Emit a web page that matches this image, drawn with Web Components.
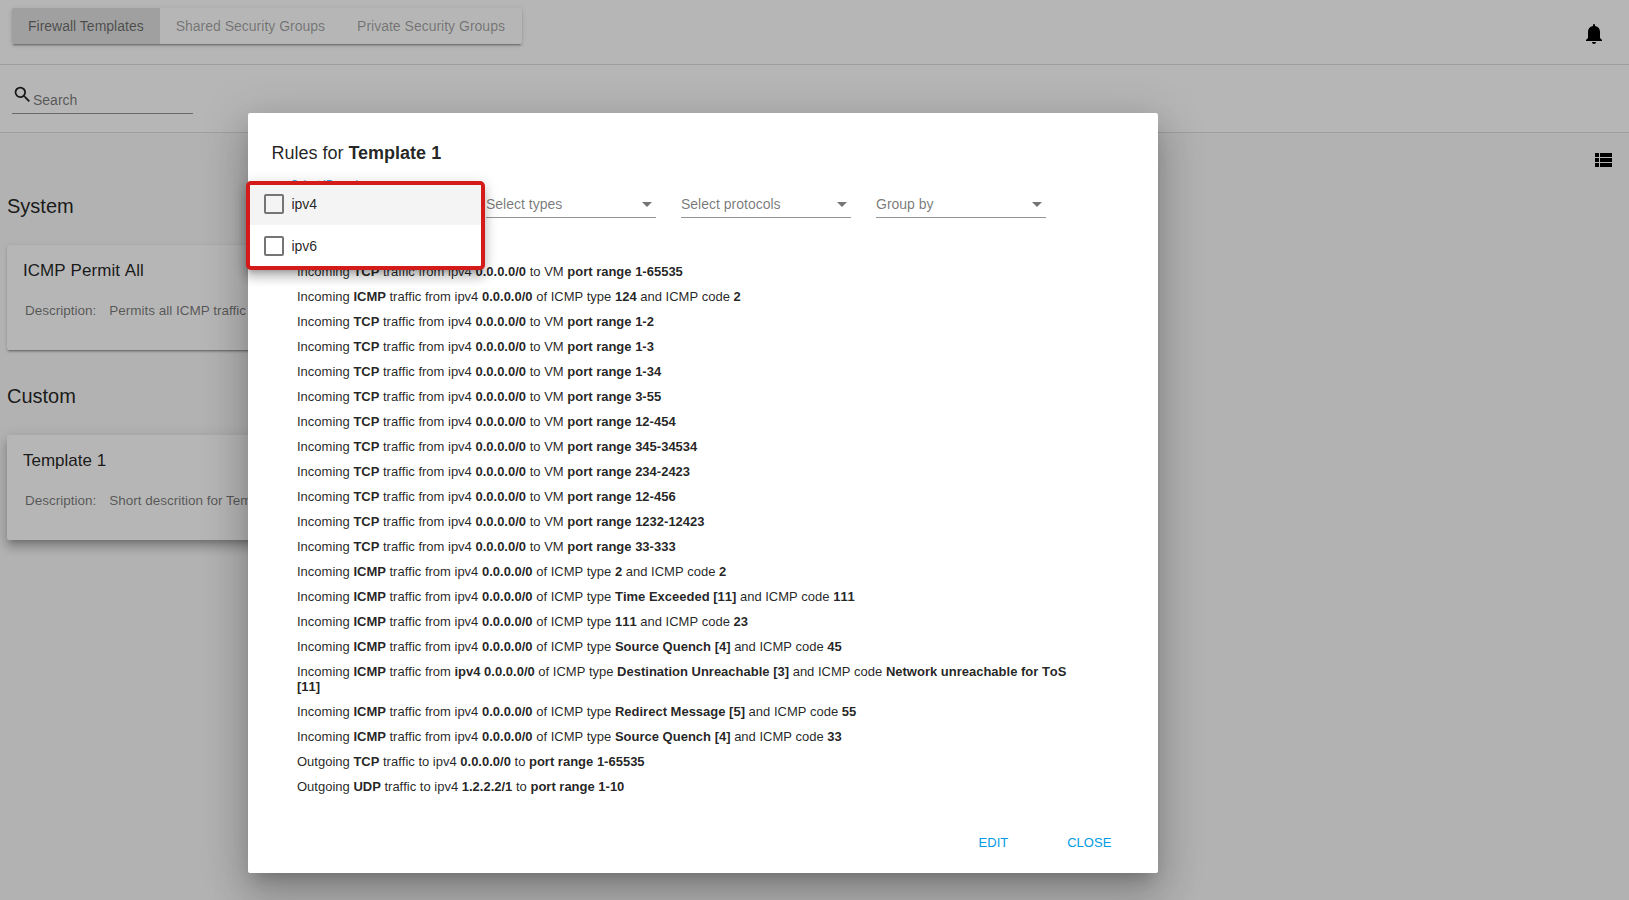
<!DOCTYPE html>
<html lang="en"><head><meta charset="utf-8"><title>Firewall</title>
<style>
html,body{margin:0;height:100%;overflow:hidden}
body{font-family:"Liberation Sans",Arial,sans-serif;background:#fafafa;color:rgba(0,0,0,.87)}
</style></head><body>
<fw-page></fw-page>
<script>
const def=(name,html,init)=>customElements.define(name,class extends HTMLElement{
  constructor(){super();const t=document.createElement('template');t.innerHTML=html;
    this.attachShadow({mode:'open'}).append(t.content.cloneNode(true));}
  connectedCallback(){if(init)init(this,this.shadowRoot);}
});

def('fw-tabs',`<style>:host{display:flex;width:509.5px;height:36px;border-radius:2px;overflow:hidden;font-size:14px;line-height:36px;color:rgba(0,0,0,.38)}
:host{box-shadow:0 3px 1px -2px rgba(0,0,0,.2),0 2px 2px 0 rgba(0,0,0,.14),0 1px 5px 0 rgba(0,0,0,.12)}
span{padding:0 16px;white-space:nowrap}span.on{background:#e0e0e0;color:rgba(0,0,0,.54)}</style>
<span class="on">Firewall Templates</span><span>Shared Security Groups</span><span>Private Security Groups</span>`);

def('fw-search',`<style>:host{display:flex;box-sizing:border-box;width:181px;height:30px;border-bottom:1px solid rgba(0,0,0,.42);font-size:14px;color:rgba(0,0,0,.54)}
svg{width:21px;height:21px;flex:none;fill:rgba(0,0,0,.87)}span{line-height:16px;padding-top:8px}</style>
<svg viewBox="0 0 24 24"><path d="M9.5 3A6.5 6.5 0 0 1 16 9.5c0 1.61-.59 3.09-1.56 4.23l.27.27h.79l5 5-1.5 1.5-5-5v-.79l-.27-.27A6.516 6.516 0 0 1 9.5 16 6.5 6.5 0 0 1 9.5 3m0 2C7 5 5 7 5 9.5S7 14 9.5 14 14 12 14 9.5 12 5 9.5 5z"/></svg><span>Search</span>`);

def('fw-card',`<style>:host{display:block;box-sizing:border-box;width:380px;height:105px;padding:16px 16px 0;border-radius:2px;background:#fff;
box-shadow:0 3px 1px -2px rgba(0,0,0,.2),0 2px 2px 0 rgba(0,0,0,.14),0 1px 5px 0 rgba(0,0,0,.12)}
:host([raised]){box-shadow:0 5px 5px -3px rgba(0,0,0,.2),0 8px 10px 1px rgba(0,0,0,.14),0 3px 14px 2px rgba(0,0,0,.12)}
h3{margin:0;font:17px/20px "Liberation Sans",sans-serif}
:host(:not([raised])) h3{font-kerning:none;letter-spacing:.06px}
p{display:flex;gap:13px;margin:22px 0 0 2px;font-size:13.5px;line-height:16px;color:rgba(0,0,0,.54);white-space:nowrap}</style>
<h3><slot name="name"></slot></h3><p><span>Description:</span><slot></slot></p>`);

def('fw-select',`<style>:host{display:flex;box-sizing:border-box;width:170px;height:25px;border-bottom:1px solid rgba(0,0,0,.42);font-size:14px;line-height:23px;color:rgba(0,0,0,.54);justify-content:space-between;position:relative}
i{border:5px solid transparent;border-top-color:rgba(0,0,0,.54);border-bottom:0;height:0;margin:9px 4px 0 0}
:host([open]) span{position:absolute;left:0;top:-15px;font-size:10.5px;line-height:12px;color:#039be5;white-space:nowrap}</style><span><slot></slot></span><i></i>`);

def('fw-option',`<style>:host{display:flex;align-items:center;height:42px;padding-left:14px;gap:7.4px;font-size:14px}
:host([active]){background:#f4f4f4}i{box-sizing:border-box;width:20px;height:20px;border:2px solid #757575;border-radius:2px}</style><i></i><slot></slot>`);

def('fw-menu',`<style>:host{display:block;box-sizing:border-box;position:absolute;left:-2px;top:68px;width:239px;height:89px;border:4px solid #d51a1a;border-radius:5px;background:#fff;overflow:hidden;
box-shadow:0 5px 5px -3px rgba(0,0,0,.2),0 8px 10px 1px rgba(0,0,0,.14),0 3px 14px 2px rgba(0,0,0,.12)}div{margin-top:-2px}</style><div><slot></slot></div>`);

const a='0.0.0.0/0';
const tcp=r=>`Incoming *TCP* traffic from ipv4 *${a}* to VM *port range ${r}*`;
const icmp=(t,c)=>`Incoming *ICMP* traffic from ipv4 *${a}* of ICMP type *${t}* and ICMP code *${c}*`;
const rules=[tcp('1-65535'),icmp('124','2'),...['1-2','1-3','1-34','3-55','12-454','345-34534','234-2423','12-456','1232-12423','33-333'].map(tcp),
icmp('2','2'),icmp('Time Exceeded [11]','111'),icmp('111','23'),icmp('Source Quench [4]','45'),
`Incoming *ICMP* traffic from *ipv4 ${a}* of ICMP type *Destination Unreachable [3]* and ICMP code *Network unreachable for ToS* *[11]*`,
icmp('Redirect Message [5]','55'),icmp('Source Quench [4]','33'),
`Outgoing *TCP* traffic to ipv4 *${a}* to *port range 1-65535*`,'Outgoing *UDP* traffic to ipv4 *1.2.2.2/1* to *port range 1-10*'];

def('fw-rules',`<style>:host{display:flex;flex-direction:column;gap:10px;width:780px;font-size:13px;line-height:15px;font-kerning:none}</style>`,
(h,s)=>rules.forEach(r=>{const d=document.createElement('div');d.innerHTML=r.replace(/\*(.+?)\*/g,'<b>$1</b>');s.append(d);}));

def('fw-dialog',`<style>:host{display:flex;flex-direction:column;box-sizing:border-box;position:relative;width:910px;height:760px;padding:24px;border-radius:2px;background:#fff;
box-shadow:0 11px 15px -7px rgba(0,0,0,.2),0 24px 38px 3px rgba(0,0,0,.14),0 9px 46px 8px rgba(0,0,0,.12)}
h2{margin:5px 0 0 -.6px;font-size:18px;line-height:22px;font-weight:400}
nav{display:flex;gap:25px;margin:29px 0 0 19px}
fw-rules{margin:46px 0 0 25px}
footer{display:flex;justify-content:flex-end;gap:59px;margin:auto 0 -1px;padding-right:22.7px;font-size:13px;line-height:15px;color:#039be5}</style>
<h2>Rules for <b>Template 1</b></h2>
<nav><fw-select open>Select IP versions</fw-select><fw-select>Select types</fw-select><fw-select>Select protocols</fw-select><fw-select>Group by</fw-select></nav>
<fw-rules></fw-rules><footer><span>EDIT</span><span>CLOSE</span></footer>
<fw-menu><fw-option active>ipv4</fw-option><fw-option>ipv6</fw-option></fw-menu>`);

def('fw-page',`<style>:host{display:block;height:900px;position:relative}
header{display:flex;box-sizing:border-box;height:65px;background:#fff;border-bottom:1px solid #dedede;padding:8px 23px 0 12px;justify-content:space-between}
header svg{margin-top:14px}
.bar{box-sizing:border-box;height:68px;background:#fff;border-bottom:1px solid #dedede;padding:19px 12px}
svg{width:24px;height:24px;display:block}
.view{display:flex;justify-content:flex-end;padding:15px 14px 0 0}
main{padding:22px 7px 0}h1{margin:0;font-size:20px;line-height:24px;font-weight:400}
h1+fw-card{margin-top:27px}fw-card+h1{margin-top:34px}
.overlay{position:absolute;inset:0;background:rgba(0,0,0,.288);padding:113px 0 0 248px}</style>
<header><fw-tabs></fw-tabs><svg viewBox="0 0 24 24"><path d="M14 20a2 2 0 0 1-2 2 2 2 0 0 1-2-2h4M12 2a1 1 0 0 1 1 1v1.08A6 6 0 0 1 18 10v6l2 2v1H4v-1l2-2v-6a6 6 0 0 1 5-5.92V3a1 1 0 0 1 1-1z"/></svg></header>
<div class="bar"><fw-search></fw-search></div>
<div class="view"><svg viewBox="0 0 24 24"><path d="M4 14h4v-4H4v4zm0 5h4v-4H4v4zM4 9h4V5H4v4zm5 5h12v-4H9v4zm0 5h12v-4H9v4zM9 5v4h12V5H9z"/></svg></div>
<main><h1>System</h1><fw-card><span slot="name">ICMP Permit All</span>Permits all ICMP traffic</fw-card>
<h1>Custom</h1><fw-card raised><span slot="name">Template 1</span>Short descrition for Template 1</fw-card></main>
<div class="overlay"><fw-dialog></fw-dialog></div>`);
</script></body></html>
